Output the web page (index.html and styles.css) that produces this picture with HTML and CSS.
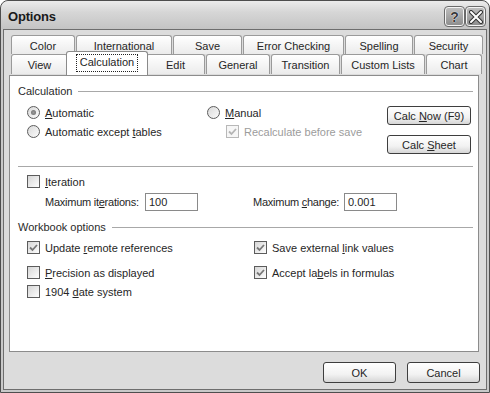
FILE: index.html
```html
<!DOCTYPE html>
<html lang="en">
<head>
<meta charset="UTF-8" />
<title>Options</title>
<link rel="stylesheet" href="styles.css">
</head>
<body>
<div class="window">
  <!-- Title bar -->
  <div class="titlebar">
    <span class="title">Options</span>
    <div class="caption-btns">
      <div class="cap-btn">?</div>
      <div class="cap-btn">
        <svg width="14" height="14" viewBox="0 0 14 14"><path d="M2 2 L12 12 M12 2 L2 12" stroke="#333" stroke-width="4" stroke-linecap="round"/><path d="M2 2 L12 12 M12 2 L2 12" stroke="#fff" stroke-width="2" stroke-linecap="round"/></svg>
      </div>
    </div>
  </div>

  <div class="client">
    <!-- Tabs -->
    <div class="tabs">
      <div class="tab-row back">
        <div class="tab" style="width:64px">Color</div>
        <div class="tab" style="width:96px">International</div>
        <div class="tab" style="width:69px">Save</div>
        <div class="tab" style="width:101px">Error Checking</div>
        <div class="tab" style="width:68px">Spelling</div>
        <div class="tab" style="width:69px">Security</div>
      </div>
      <div class="tab-row front">
        <div class="tab" style="width:57px">View</div>
        <div class="tab active" style="width:82px"><span class="focus">Calculation</span></div>
        <div class="tab" style="width:59px">Edit</div>
        <div class="tab" style="width:64px">General</div>
        <div class="tab" style="width:69px">Transition</div>
        <div class="tab" style="width:84px">Custom Lists</div>
        <div class="tab" style="width:56px">Chart</div>
      </div>
    </div>

    <!-- Panel -->
    <div class="panel">
      <div class="group-head">Calculation<span class="rule"></span></div>
      <div class="calc">
        <div class="col col-a">
          <div class="opt"><span class="radio on"></span><span><u>A</u>utomatic</span></div>
          <div class="opt"><span class="radio"></span><span>Automatic except <u>t</u>ables</span></div>
        </div>
        <div class="col col-b">
          <div class="opt"><span class="radio"></span><span><u>M</u>anual</span></div>
          <div class="opt indent disabled">
            <span class="check on"><svg width="11" height="11" viewBox="0 0 11 11"><path d="M2 5.5 L4.5 8 L9 3" fill="none" stroke="#b4b4b4" stroke-width="1.8"/></svg></span>
            <span>Recalculate before save</span>
          </div>
        </div>
        <div class="col col-c">
          <div class="btn"><span>Calc <u>N</u>ow (F9)</span></div>
          <div class="btn"><span>Calc <u>S</u>heet</span></div>
        </div>
      </div>
      <div class="sep"></div>

      <div class="opt iter"><span class="check"></span><span><u>I</u>teration</span></div>
      <div class="fields">
        <div class="field-group first">
          <span class="lbl">Maximum it<u>e</u>rations:</span><span class="input">100</span>
        </div>
        <div class="field-group second">
          <span class="lbl">Maximum <u>c</u>hange:</span><span class="input">0.001</span>
        </div>
      </div>

      <div class="group-head wb">Workbook options<span class="rule"></span></div>
      <div class="checks">
        <div class="opt"><span class="check on"><svg width="11" height="11" viewBox="0 0 11 11"><path d="M2 5.5 L4.5 8 L9 3" fill="none" stroke="#777" stroke-width="1.8"/></svg></span><span>Update <u>r</u>emote references</span></div>
        <div class="opt"><span class="check on"><svg width="11" height="11" viewBox="0 0 11 11"><path d="M2 5.5 L4.5 8 L9 3" fill="none" stroke="#777" stroke-width="1.8"/></svg></span><span>Save external <u>l</u>ink values</span></div>
        <div class="opt"><span class="check"></span><span><u>P</u>recision as displayed</span></div>
        <div class="opt"><span class="check on"><svg width="11" height="11" viewBox="0 0 11 11"><path d="M2 5.5 L4.5 8 L9 3" fill="none" stroke="#777" stroke-width="1.8"/></svg></span><span>Accept la<u>b</u>els in formulas</span></div>
        <div class="opt"><span class="check"></span><span>1904 <u>d</u>ate system</span></div>
      </div>
    </div>

    <!-- Dialog buttons -->
    <div class="footer">
      <div class="btn big"><span>OK</span></div>
      <div class="btn big"><span>Cancel</span></div>
    </div>
  </div>
</div>
</body>
</html>
```

FILE: styles.css
```css
html, body {
  margin: 0;
  padding: 0;
  background: #ffffff;
}

body {
  font-family: 'Liberation Sans', Arial, sans-serif;
  font-size: 11px;
  color: #262626;
}

u {
  text-decoration: underline;
  text-underline-offset: 1px;
}

.window {
  width: 490px;
  height: 393px;
  box-sizing: border-box;
  border: 1px solid #4e4e4e;
  border-radius: 8px 8px 0 0;
  background: #c9c9c9;
  padding: 0 2px 2px;
  display: flex;
  flex-direction: column;
  overflow: hidden;
}

/* title bar */
.titlebar {
  height: 28px;
  margin: 0 -2px;
  padding: 0 4px 0 7px;
  display: flex;
  align-items: center;
  justify-content: space-between;
  background: linear-gradient(#ececec, #d6d6d6 40%, #c4c4c4);
  border-radius: 7px 7px 0 0;
}

.title {
  font-size: 13px;
  font-weight: bold;
  color: #1a1a1a;
  letter-spacing: -0.2px;
  padding-top: 2px;
}

.caption-btns {
  display: flex;
  gap: 2px;
  padding-top: 3px;
}

.cap-btn {
  width: 19px;
  height: 19px;
  box-sizing: border-box;
  border: 1px solid #f4f4f4;
  outline: 1px solid #6a6a6a;
  border-radius: 3px;
  background: linear-gradient(#bdbdbd, #8e8e8e);
  display: flex;
  align-items: center;
  justify-content: center;
  font-size: 14px;
  font-weight: bold;
  color: #3a3a3a;
  text-shadow: 0 0 1px #fff, 0 0 1px #fff;
}

/* client area */
.client {
  flex: 1;
  border: 1px solid #6e6e6e;
  background: #dcdcdc;
  padding: 5px 0 0 5px;
  display: flex;
  flex-direction: column;
}

.tabs {
  margin-left: 2px;
}

.tab-row {
  display: flex;
}

.tab {
  box-sizing: border-box;
  margin-right: 1px;
  border: 1px solid #9a9a9a;
  border-bottom: none;
  border-radius: 3px 3px 0 0;
  background: linear-gradient(#ffffff, #ebebeb);
  display: flex;
  align-items: center;
  justify-content: center;
  color: #262626;
  padding-top: 1px;
}

.tab-row.back .tab {
  height: 19px;
}

.tab-row.front .tab {
  height: 20px;
}

.tab:last-child {
  margin-right: 0;
}

.tab.active {
  position: relative;
  z-index: 2;
  height: 24px !important;
  margin: -3px -2px 0 -3px;
  background: #fff;
  border-color: #8a8a8a;
  align-items: flex-start;
  padding-top: 3px;
}

.focus {
  outline: 1px dotted #222;
  padding: 1px 3px 2px;
  line-height: 13px;
}

.panel {
  position: relative;
  z-index: 1;
  width: 470px;
  height: 277px;
  box-sizing: border-box;
  border: 1px solid #8c8c8c;
  background: #fff;
}

.group-head {
  display: flex;
  align-items: center;
  margin: 8px 5px 0 8px;
  line-height: 14px;
  color: #2a2a2a;
}

.rule {
  flex: 1;
  height: 1px;
  background: #a8a8a8;
  margin-left: 6px;
}

.calc {
  display: flex;
  padding-left: 17px;
  margin-top: 5px;
}

.col-a,
.col-b {
  width: 180px;
}

.opt {
  display: flex;
  align-items: center;
  gap: 5px;
  height: 19px;
  white-space: nowrap;
}

.opt.indent {
  padding-left: 19px;
}

.opt.disabled {
  color: #9c9c9c;
}

.radio {
  width: 13px;
  height: 13px;
  box-sizing: border-box;
  border-radius: 50%;
  border: 1px solid #5c5c5c;
  background: linear-gradient(135deg, #d9d9d9, #fbfbfb);
  display: flex;
  align-items: center;
  justify-content: center;
}

.radio.on::after {
  content: "";
  width: 5px;
  height: 5px;
  border-radius: 50%;
  background: radial-gradient(#9a9a9a, #6a6a6a);
}

.check {
  width: 13px;
  height: 13px;
  box-sizing: border-box;
  border: 1px solid #5c5c5c;
  background: linear-gradient(135deg, #d6d6d6, #fdfdfd);
  display: flex;
  align-items: center;
  justify-content: center;
}

.disabled .check {
  border-color: #b8b8b8;
  background: #f6f6f6;
}

.col-c {
  display: flex;
  flex-direction: column;
  gap: 10px;
  margin-top: 3px;
}

.btn {
  width: 84px;
  height: 19px;
  box-sizing: border-box;
  border: 1px solid #3e3e3e;
  border-radius: 3px;
  background: linear-gradient(#ffffff, #f2f2f2 60%, #d6d6d6);
  display: flex;
  align-items: center;
  justify-content: center;
  color: #262626;
  white-space: nowrap;
}

.sep {
  height: 1px;
  background: #a8a8a8;
  margin: 12px 5px 0 8px;
}

.opt.iter {
  margin: 5px 0 0 17px;
}

.fields {
  display: flex;
  margin: 2px 0 0 35px;
}

.field-group {
  display: flex;
  align-items: center;
  justify-content: space-between;
  white-space: nowrap;
}

.field-group.first {
  width: 153px;
  margin-right: 55px;
}

.field-group.second {
  width: 144px;
}

.lbl {
  letter-spacing: -0.25px;
  margin-right: 3px;
}

.input {
  flex-shrink: 0;
  width: 53px;
  height: 18px;
  box-sizing: border-box;
  border: 1px solid #8a8a8a;
  padding-left: 3px;
  display: flex;
  align-items: center;
}

.group-head.wb {
  margin-top: 9px;
}

.checks {
  display: grid;
  grid-template-columns: 227px auto;
  grid-template-rows: 25px 19px 19px;
  align-items: start;
  margin: 4px 0 0 17px;
}

.footer {
  display: flex;
  justify-content: flex-end;
  gap: 11px;
  margin: 10px 6px 0 0;
}

.btn.big {
  width: 73px;
  height: 21px;
}
```
